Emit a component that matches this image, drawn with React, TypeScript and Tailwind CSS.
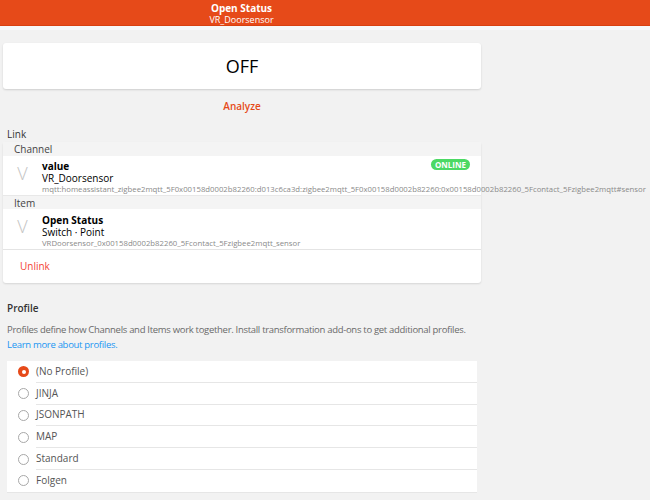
import React from "react";

const profiles = ["(No Profile)", "JINJA", "JSONPATH", "MAP", "Standard", "Folgen"];

function Radio({ checked }: { checked: boolean }) {
  return checked ? (
    <span className="flex h-[11px] w-[11px] items-center justify-center rounded-full bg-[#e64a19]">
      <span className="h-[4px] w-[4px] rounded-full bg-white" />
    </span>
  ) : (
    <span className="h-[11px] w-[11px] rounded-full border border-[#a8a8a8] bg-white" />
  );
}

export default function App() {
  return (
    <div className="min-h-[500px] bg-[#f2f2f2] text-[#222] [font-family:'Open_Sans','Noto_Sans',sans-serif]">
      <header className="h-[26px] border-b border-[#d8400f] bg-[#e64a19] text-white">
        <div className="flex w-[483px] flex-col items-center pt-[2px]">
          <div className="text-[10px] font-bold leading-[12px]">Open Status</div>
          <div className="text-[9px] leading-[11px]">VR_Doorsensor</div>
        </div>
      </header>
      <div className="h-[4px] bg-[#f7f7f7]" />

      <div className="ml-[3px] w-[478px] pt-[13px]">
        <div className="flex h-[46px] items-center justify-center rounded-[3px] bg-white text-[18px] text-black shadow-[0_1px_2px_rgba(0,0,0,0.15)]">
          OFF
        </div>

        <div className="mt-[10px] text-center text-[10px] font-semibold leading-[14px] text-[#e64a19]">
          Analyze
        </div>

        <div className="mt-[15px] pl-[4px] text-[10px] leading-[12px] text-[#333]">Link</div>

        <div className="mt-[2px] rounded-[3px] bg-white shadow-[0_1px_2px_rgba(0,0,0,0.12)]">
          <div className="bg-[#f4f4f4] pl-[11px] pt-[1px] text-[10px] leading-[13px] text-[#444]">Channel</div>
          <div className="relative flex h-[40px] items-start border-b border-[#e8e8e8]">
            <div className="w-[39px] shrink-0 pt-[8px] text-center text-[18px] font-light leading-[18px] text-[#c4c4c4]">V</div>
            <div className="pt-[4px]">
              <div className="text-[10px] font-bold leading-[12px] text-black">value</div>
              <div className="text-[10px] leading-[12px] text-black">VR_Doorsensor</div>
              <div className="whitespace-nowrap text-[7.75px] leading-[11px] text-[#8a8a8a]">
                mqtt:homeassistant_zigbee2mqtt_5F0x00158d0002b82260:d013c6ca3d:zigbee2mqtt_5F0x00158d0002b82260:0x00158d0002b82260_5Fcontact_5Fzigbee2mqtt#sensor
              </div>
            </div>
            <span className="absolute right-[11px] top-[3px] rounded-full bg-[#4cd964] px-[4px] text-[8px] font-bold leading-[11px] text-white">
              ONLINE
            </span>
          </div>
          <div className="bg-[#f4f4f4] pl-[11px] pt-[1px] text-[10px] leading-[12px] text-[#444]">Item</div>
          <div className="flex h-[41px] items-start border-b border-[#e4e4e4]">
            <div className="w-[39px] shrink-0 pt-[8px] text-center text-[18px] font-light leading-[18px] text-[#c4c4c4]">V</div>
            <div className="pt-[5px]">
              <div className="text-[10px] font-bold leading-[12px] text-black">Open Status</div>
              <div className="text-[10px] leading-[12px] text-black">Switch · Point</div>
              <div className="whitespace-nowrap text-[7.75px] leading-[11px] text-[#8a8a8a]">
                VRDoorsensor_0x00158d0002b82260_5Fcontact_5Fzigbee2mqtt_sensor
              </div>
            </div>
          </div>
          <div className="flex h-[33px] items-center pl-[17px] text-[10px] text-[#f44336]">Unlink</div>
        </div>

        <div className="mt-[19px] pl-[4px] text-[10px] font-semibold leading-[12px] text-[#333]">Profile</div>
        <div className="mt-[8px] whitespace-nowrap pl-[4px] text-[9.5px] leading-[15px] tracking-[-0.3px] text-[#6a6a6a]">
          Profiles define how Channels and Items work together. Install transformation add-ons to get additional profiles.
          <br />
          <span className="text-[#2196f3]">Learn more about profiles.</span>
        </div>
      </div>

      <div className="ml-[7px] mt-[9px] w-[470px] border-b border-[#e6e6e6] bg-white">
        {profiles.map((p, i) => (
          <div key={p} className="flex h-[21.8px] items-center">
            <div className="flex w-[29px] shrink-0 justify-center pl-[4px]">
              <Radio checked={i === 0} />
            </div>
            <div
              className={`flex h-full flex-1 items-center text-[10px] text-[#555] ${
                i < profiles.length - 1 ? "border-b border-[#e6e6e6]" : ""
              }`}
            >
              {p}
            </div>
          </div>
        ))}
      </div>
    </div>
  );
}
